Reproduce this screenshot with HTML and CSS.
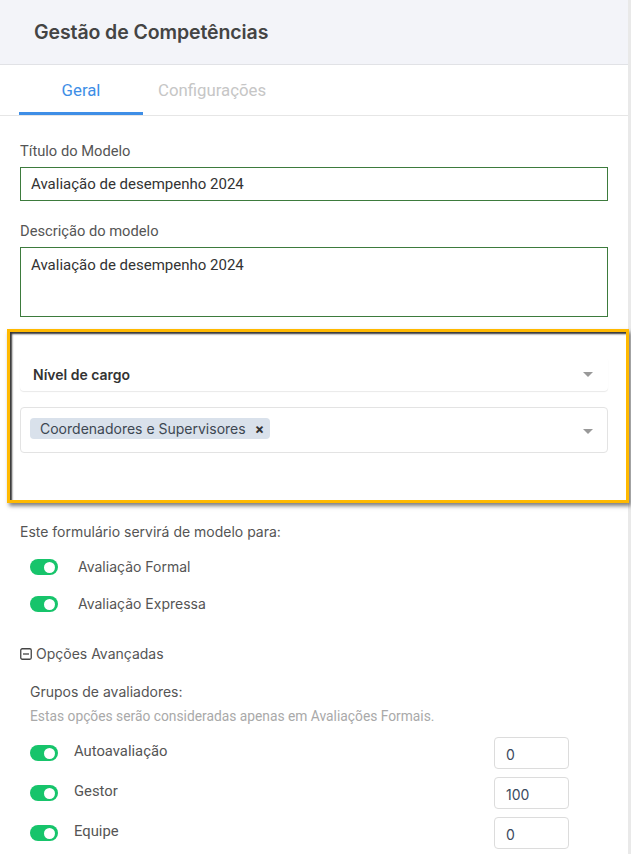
FILE: index.html
```html
<!DOCTYPE html>
<html lang="pt-BR">
<head>
<meta charset="utf-8">
<title>Gestão de Competências</title>
<link rel="stylesheet" href="styles.css">
</head>
<body>
<div class="page">
  <header class="topbar">
    <h1 class="title">Gestão de Competências</h1>
  </header>
  <nav class="tabs">
    <a class="tab tab-active">Geral</a>
    <a class="tab tab-muted">Configurações</a>
  </nav>
  <main class="form">
    <div class="field">
      <label class="label">Título do Modelo</label>
      <div class="input">Avaliação de desempenho 2024</div>
    </div>
    <div class="field field-desc">
      <label class="label">Descrição do modelo</label>
      <div class="input textarea">Avaliação de desempenho 2024</div>
    </div>

    <section class="highlight">
      <div class="select-card">
        <span class="select-title">Nível de cargo</span>
        <span class="caret"></span>
      </div>
      <div class="multi">
        <span class="chip">Coordenadores e Supervisores <span class="chip-x">×</span></span>
        <span class="caret"></span>
      </div>
    </section>

    <p class="intro">Este formulário servirá de modelo para:</p>
    <div class="toggle-list">
      <div class="toggle-row"><span class="switch"></span><span class="toggle-label">Avaliação Formal</span></div>
      <div class="toggle-row"><span class="switch"></span><span class="toggle-label">Avaliação Expressa</span></div>
    </div>

    <div class="advanced">
      <svg class="minus-box" width="12" height="12" viewBox="0 0 12 12"><rect x="0.75" y="0.75" width="10.5" height="10.5" rx="1.5" fill="none" stroke="#444" stroke-width="1.3"/><line x1="3" y1="6" x2="9" y2="6" stroke="#444" stroke-width="1.3"/></svg>
      <span>Opções Avançadas</span>
    </div>

    <div class="groups">
      <p class="groups-title">Grupos de avaliadores:</p>
      <p class="hint">Estas opções serão consideradas apenas em Avaliações Formais.</p>
      <div class="weight-row"><span class="switch"></span><span class="weight-label">Autoavaliação</span><span class="num">0</span></div>
      <div class="weight-row"><span class="switch"></span><span class="weight-label">Gestor</span><span class="num">100</span></div>
      <div class="weight-row"><span class="switch"></span><span class="weight-label">Equipe</span><span class="num">0</span></div>
    </div>
  </main>
</div>
</body>
</html>
```
FILE: styles.css
```css
* { box-sizing: border-box; }
html, body { margin: 0; padding: 0; }
body {
  background: #e9e9e9;
  font-family: Inter, "Noto Sans", sans-serif;
  color: #444;
  height: 854px;
  overflow: hidden;
}
.page {
  width: 628px;
  background: #fff;
  min-height: 854px;
}
.topbar {
  height: 65px;
  background: #f3f4f9;
  border-bottom: 1px solid #e1e2e6;
  display: flex;
  align-items: center;
  padding-left: 34px;
  padding-bottom: 1px;
}
.title {
  margin: 0;
  font-size: 19.5px;
  font-weight: 600;
  color: #444;
  letter-spacing: -0.1px;
}
.tabs {
  height: 51px;
  border-bottom: 1px solid #e6e6e6;
  display: flex;
  padding-left: 19px;
}
.tab {
  font-family: Roboto, sans-serif;
  font-size: 16.8px;
  display: flex;
  align-items: center;
  height: 50px;
}
.tab-active {
  width: 124px;
  justify-content: center;
  color: #3e8ee6;
  border-bottom: 3px solid #3e8ee6;
  padding-top: 3px;
}
.tab-muted {
  padding-left: 15px;
  color: #c6c6c6;
}
.form {
  padding: 27px 20px 0 20px;
}
.label {
  display: block;
  font-family: Roboto, sans-serif;
  font-size: 14.7px;
  line-height: 17px;
  color: #555;
  margin-bottom: 7px;
}
.input {
  border: 1px solid #3d7b3d;
  height: 34px;
  padding: 0 10px;
  font-family: Roboto, sans-serif;
  font-size: 15px;
  color: #333;
  display: flex;
  align-items: center;
}
.field-desc { margin-top: 22px; }
.textarea {
  height: 70px;
  align-items: flex-start;
  padding-top: 8px;
}
.highlight {
  margin: 12px -21px 0 -13px;
  border: 3px solid #ffb900;
  box-shadow: inset 2px 2px 2px rgba(0,0,0,0.8), 2px 3px 4px rgba(0,0,0,0.5);
  padding: 25px 18px 47px 10px;
}
.select-card {
  height: 34px;
  border-radius: 4px;
  box-shadow: 0 1px 1px rgba(0,0,0,0.09);
  display: flex;
  align-items: center;
  justify-content: space-between;
  padding: 0 15px 0 13px;
}
.select-title {
  font-size: 14px;
  font-weight: 600;
  color: #333;
}
.caret {
  width: 0;
  height: 0;
  border-left: 5.5px solid transparent;
  border-right: 5.5px solid transparent;
  border-top: 5px solid #999;
}
.multi {
  margin-top: 16px;
  height: 46px;
  border: 1px solid #e3e3e3;
  border-radius: 4px;
  display: flex;
  align-items: center;
  justify-content: space-between;
  padding: 0 14px 0 9px;
}
.multi .caret { margin-top: 2px; }
.chip {
  background: #d9e1eb;
  border-radius: 4px;
  height: 21px;
  display: flex;
  align-items: center;
  padding: 0 6px 0 10px;
  margin-bottom: 3px;
  font-size: 14px;
  color: #3d4752;
}
.chip-x {
  font-weight: 700;
  font-size: 14px;
  margin-left: 9px;
  color: #333;
}
.intro {
  margin: 20px 0 0;
  font-size: 14px;
  line-height: 17px;
  color: #555;
}
.toggle-list {
  padding-left: 10px;
  margin-top: 16px;
  display: flex;
  flex-direction: column;
  gap: 15px;
}
.toggle-row {
  height: 22px;
  display: flex;
  align-items: center;
}
.switch {
  position: relative;
  width: 28px;
  height: 16px;
  border-radius: 8px;
  background: #17c46b;
  flex: none;
}
.switch::after {
  content: "";
  position: absolute;
  right: 3px;
  top: 2.5px;
  width: 11px;
  height: 11px;
  border-radius: 50%;
  background: #fff;
}
.toggle-label {
  margin-left: 20px;
  font-size: 14px;
  color: #555;
  margin-top: -1px;
}
.advanced {
  margin-top: 29px;
  display: flex;
  align-items: center;
  gap: 4px;
  font-size: 14px;
  color: #555;
  line-height: 20px;
}
.minus-box { display: block; }
.groups {
  padding-left: 10px;
}
.groups-title {
  margin: 19px 0 0;
  font-size: 14px;
  line-height: 18px;
  color: #555;
}
.hint {
  margin: 7px 0 0;
  font-family: Roboto, sans-serif;
  font-size: 13.8px;
  line-height: 16px;
  color: #a9a9a9;
}
.weight-row {
  width: 539px;
  display: grid;
  grid-template-columns: 28px 1fr 75px;
  column-gap: 16px;
  align-items: center;
  height: 32px;
  margin-top: 8px;
}
.weight-row:first-of-type { margin-top: 13px; }
.weight-label {
  font-family: Roboto, sans-serif;
  font-size: 14.8px;
  color: #555;
  margin-top: -4px;
}
.num {
  height: 32px;
  border: 1px solid #dcdcdc;
  border-radius: 4px;
  display: flex;
  align-items: center;
  padding: 2px 11px 0;
  font-size: 14px;
  color: #3b4a5e;
}
```
